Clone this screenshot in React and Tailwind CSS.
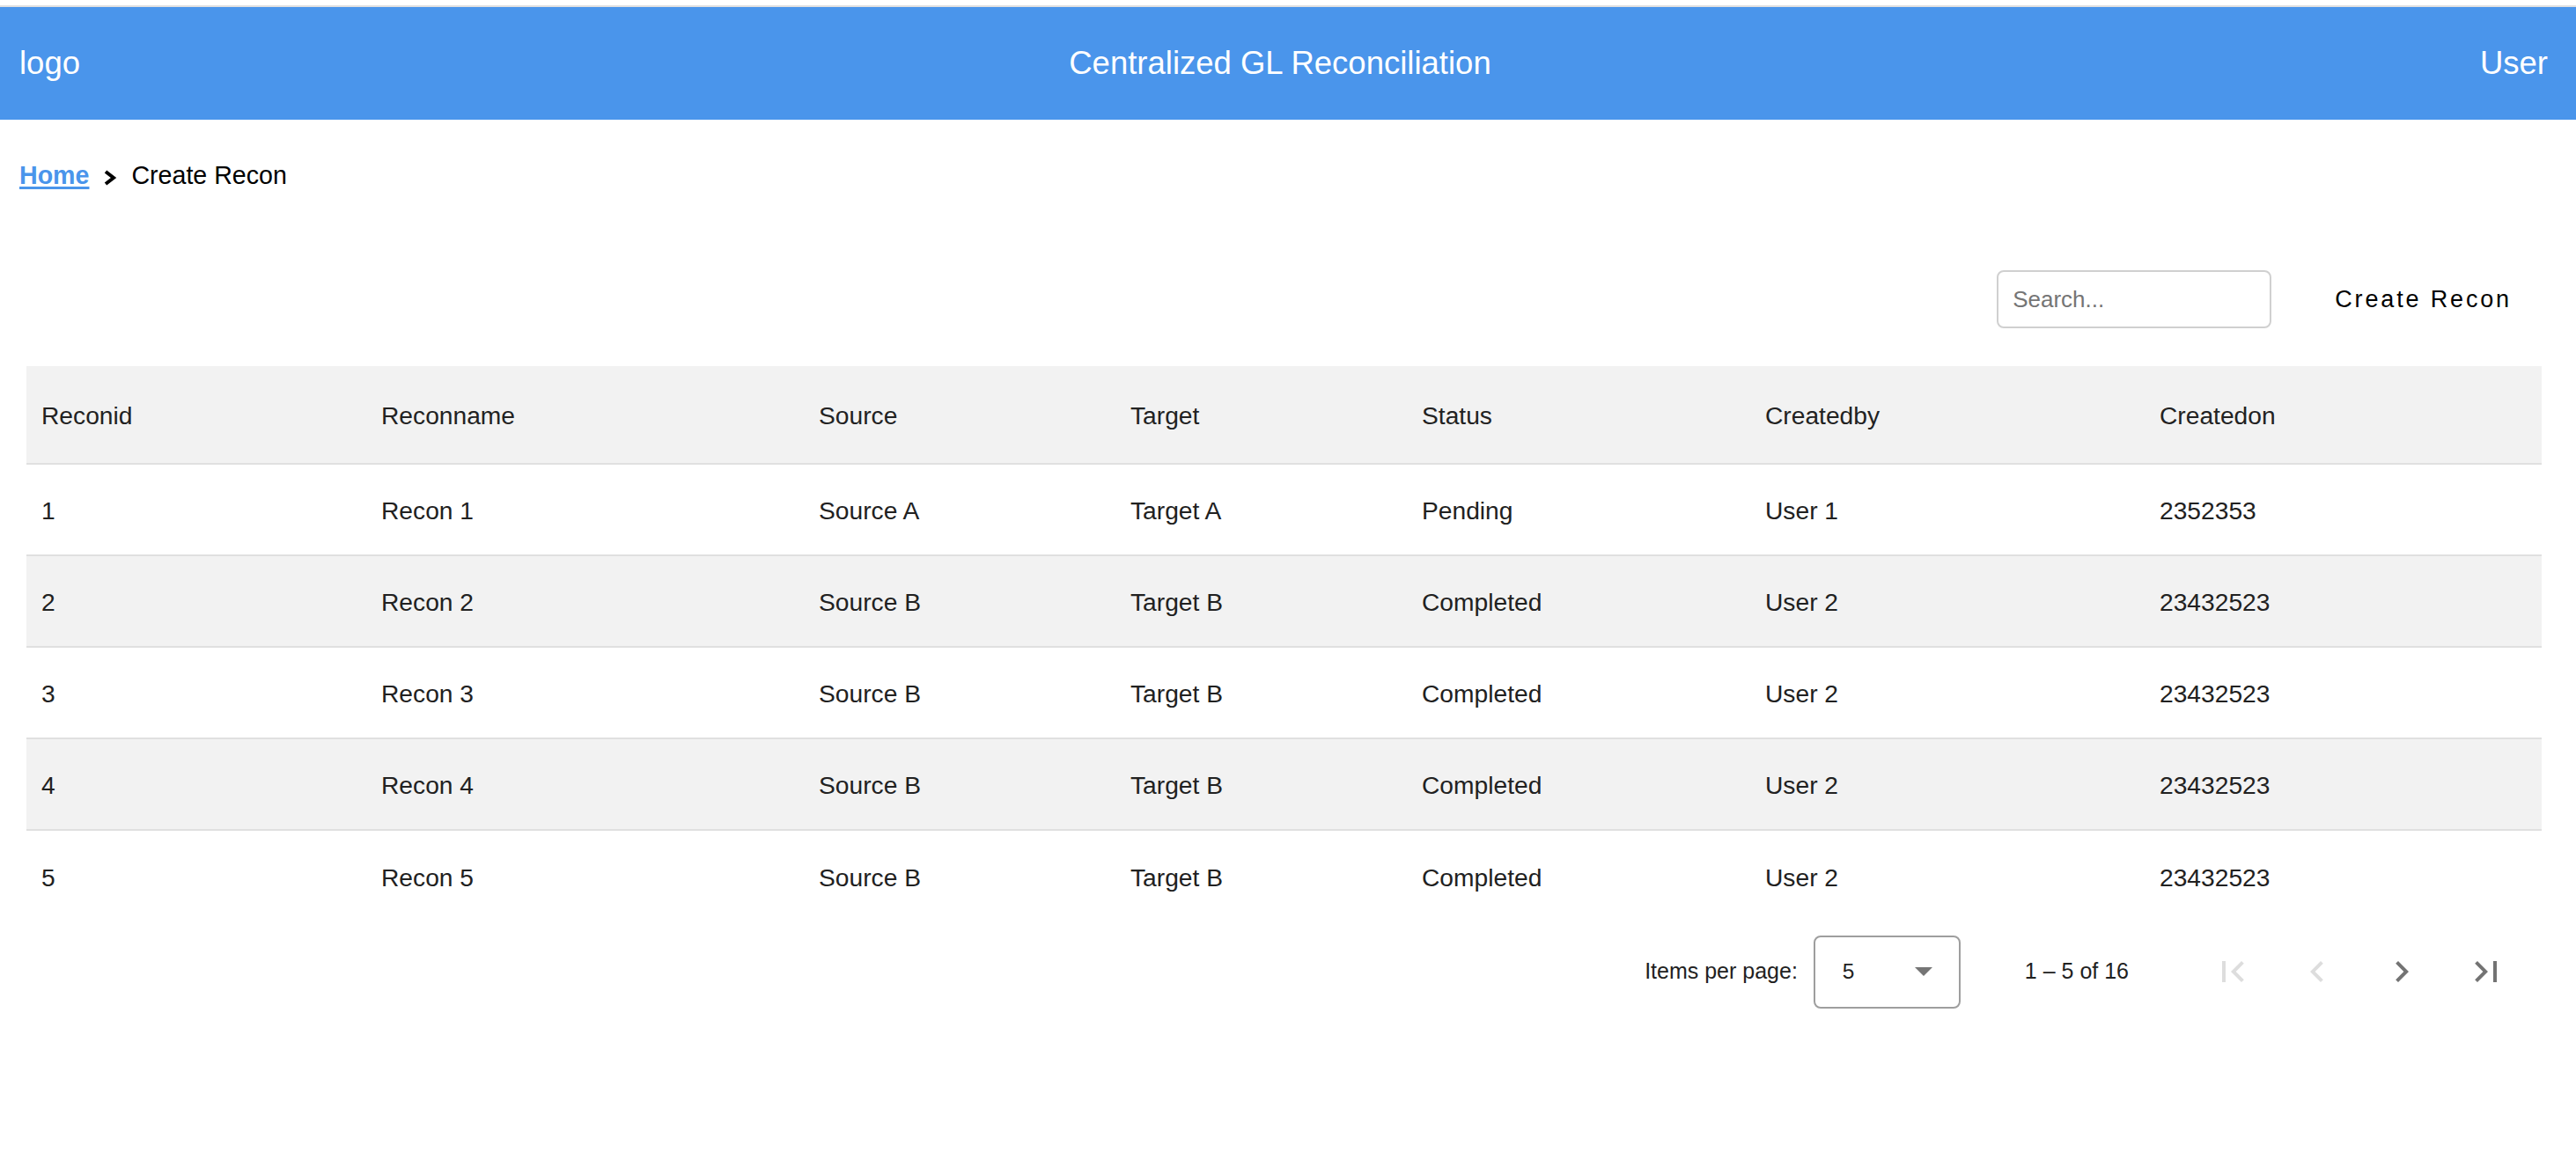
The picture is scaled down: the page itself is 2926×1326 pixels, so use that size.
import React from "react";

const rows = [
  ["1", "Recon 1", "Source A", "Target A", "Pending", "User 1", "2352353"],
  ["2", "Recon 2", "Source B", "Target B", "Completed", "User 2", "23432523"],
  ["3", "Recon 3", "Source B", "Target B", "Completed", "User 2", "23432523"],
  ["4", "Recon 4", "Source B", "Target B", "Completed", "User 2", "23432523"],
  ["5", "Recon 5", "Source B", "Target B", "Completed", "User 2", "23432523"],
];

const headers = ["Reconid", "Reconname", "Source", "Target", "Status", "Createdby", "Createdon"];

const gridCols = "grid grid-cols-[386px_497px_354px_331px_390px_448px_1fr]";

function PagerIcon({ d, disabled }) {
  return (
    <button className="flex h-[96px] w-[96px] items-center justify-center" disabled={disabled}>
      <svg width="48" height="48" viewBox="0 0 24 24" className={disabled ? "fill-[#dddddd]" : "fill-[#737373]"}>
        <path d={d} />
      </svg>
    </button>
  );
}

export default function App() {
  return (
    <div className="min-h-screen bg-white pt-[6px] font-['Liberation_Sans',Arial,sans-serif] text-[#212121]">
      <header className="flex h-[130px] items-center justify-between border-t-2 border-[#e0e0e0] bg-[#4a95eb] pl-[22px] pr-[32px] text-[36.5px] text-white">
        <span>logo</span>
        <span>Centralized GL Reconciliation</span>
        <span>User</span>
      </header>

      <nav className="ml-[22px] mt-[47px] flex h-[32px] items-start text-[28.6px] leading-[32px]">
        <a href="#" className="font-bold text-[#4a95eb] underline decoration-[3px] underline-offset-[3px]">
          Home
        </a>
        <svg width="16" height="18" viewBox="0 0 16 18" className="ml-[16px] mr-[16px] mt-[10px] shrink-0">
          <path d="M3 2 L12 9 L3 16" fill="none" stroke="#000" strokeWidth="4" />
        </svg>
        <span className="text-black">Create Recon</span>
      </nav>

      <div className="ml-[30px] mr-[39px]">
        <div className="mt-[92px] flex h-[66px] items-center justify-end">
          <input
            type="text"
            placeholder="Search..."
            className="h-[66px] w-[312px] rounded-[8px] border-2 border-[#d0d0d0] pl-[16px] text-[26px] outline-none placeholder:text-[#757575]"
          />
          <button className="ml-[38px] h-[72px] px-[34px] text-[27px] tracking-[2.85px] text-black">
            Create Recon
          </button>
        </div>

        <div className="mt-[43px] text-[28.2px]">
          <div className={`${gridCols} h-[112px] items-center border-b-2 border-[#e0e0e0] bg-[#f2f2f2] text-[#222]`}>
            {headers.map((h) => (
              <div key={h} className="pl-[17px] pt-[2px]">
                {h}
              </div>
            ))}
          </div>
          {rows.map((r, i) => (
            <div
              key={r[0]}
              className={`${gridCols} h-[104px] items-center ${i < rows.length - 1 ? "border-b-2 border-[#e0e0e0]" : ""} ${
                i % 2 === 1 ? "bg-[#f2f2f2]" : "bg-white"
              }`}
            >
              {r.map((c, j) => (
                <div key={j} className="pl-[17px] pt-[2px]">
                  {c}
                </div>
              ))}
            </div>
          ))}
        </div>

        <div className="flex h-[112px] items-center justify-end pr-[15px]">
          <span className="mr-[18px] text-[25px] text-[#212121]">Items per page:</span>
          <div className="flex h-[83px] w-[167px] items-center justify-between rounded-[8px] border-2 border-[#9e9e9e] pl-[31px] pr-[30px] text-[24.5px]">
            <span>5</span>
            <svg width="20" height="10" viewBox="0 0 20 10">
              <polygon points="0,0 20,0 10,10" fill="#757575" />
            </svg>
          </div>
          <span className="ml-[73px] mr-[70px] text-[25px]">1 – 5 of 16</span>
          <div className="flex">
            <PagerIcon disabled d="M18.41 16.59L13.82 12l4.59-4.59L17 6l-6 6 6 6zM6 6h2v12H6z" />
            <PagerIcon disabled d="M15.41 7.41L14 6l-6 6 6 6 1.41-1.41L10.83 12z" />
            <PagerIcon d="M10 6L8.59 7.41 13.17 12l-4.58 4.59L10 18l6-6z" />
            <PagerIcon d="M5.59 7.41L10.18 12l-4.59 4.59L7 18l6-6-6-6zM16 6h2v12h-2z" />
          </div>
        </div>
      </div>
    </div>
  );
}
